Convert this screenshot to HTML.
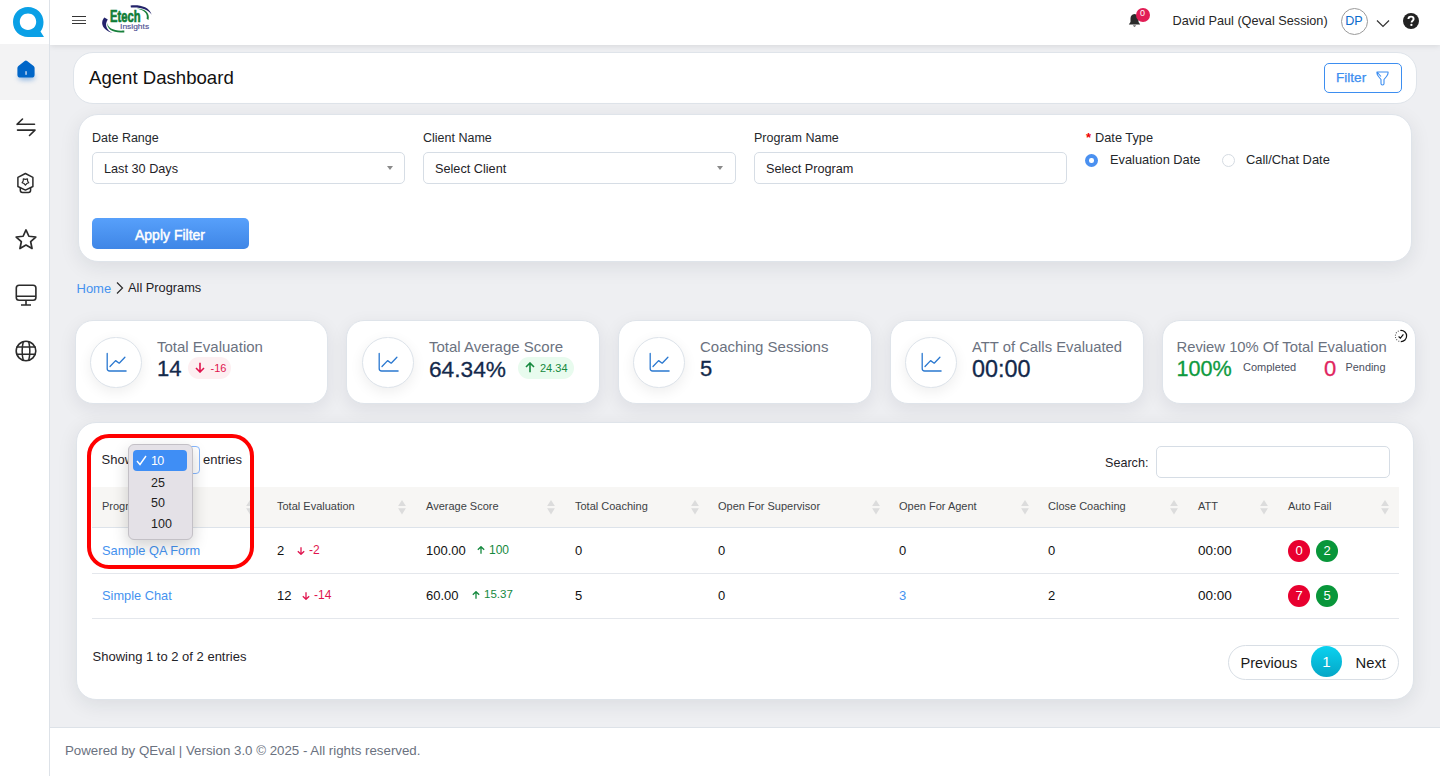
<!DOCTYPE html>
<html><head><meta charset="utf-8">
<style>
*{box-sizing:border-box;margin:0;padding:0}
html,body{width:1440px;height:776px;overflow:hidden}
body{background:#eeeff2;font-family:"Liberation Sans",sans-serif;color:#1f2328;position:relative}
.abs{position:absolute}
.t{position:absolute;white-space:nowrap;line-height:1}
#sidebar{position:absolute;left:0;top:0;width:50px;height:776px;background:#fff;border-right:1px solid #dde2e8;z-index:5}
#header{position:absolute;left:50px;top:0;width:1390px;height:45px;background:#fff;box-shadow:0 1px 6px rgba(0,0,0,.10);z-index:4}
#footer{position:absolute;left:50px;top:727px;width:1390px;height:49px;background:#fff;border-top:1px solid #dde2e8}
.card{position:absolute;background:#fff;border-radius:20px;border:1px solid #dfe4ea;box-shadow:0 5px 20px rgba(20,30,50,.085)}
.inp{position:absolute;background:#fff;border:1px solid #d6dde5;border-radius:5px}
.lbl{font-size:13px;color:#25282c}
.caret{position:absolute;width:0;height:0;border-left:3px solid transparent;border-right:3px solid transparent;border-top:4px solid #8a8a8a}
.stat{position:absolute;top:320px;width:252px;height:83px;border:1px solid transparent}
.statbg{position:absolute;top:320px;width:254px;height:84px;background:#fff;border-radius:18px;border:1px solid #dfe4ea;box-shadow:0 5px 18px rgba(20,30,50,.08)}
.ic{position:absolute;left:14px;top:15.5px;width:51.5px;height:51.5px;border-radius:50%;border:1px solid #dde3ea;background:#fff;box-shadow:0 4px 14px rgba(0,0,0,.07)}
.ic svg{position:absolute;left:14.5px;top:14.5px}
.st-title{position:absolute;left:81px;top:18px;font-size:15px;color:#6b7280;white-space:nowrap;line-height:1}
.st-val{position:absolute;left:81px;top:37px;font-size:22px;color:#13294b;-webkit-text-stroke:0.3px currentColor;white-space:nowrap;line-height:1}
.pill{position:absolute;height:22px;border-radius:11px;font-size:11px;line-height:22px;white-space:nowrap}
.th{position:absolute;top:501px;font-size:11px;color:#3c3f44;white-space:nowrap;line-height:1}
.sort{position:absolute;top:499.7px;width:8px;height:15px;line-height:0}
.td{position:absolute;font-size:13px;color:#111;white-space:nowrap;line-height:1}
.dot{position:absolute;width:22px;height:22px;border-radius:50%;color:#fff;font-size:13px;text-align:center;line-height:22px}
</style></head><body>

<!-- SIDEBAR -->
<div id="sidebar">
  <svg class="abs" style="left:12px;top:6px" width="33" height="32" viewBox="0 0 33 32">
    <path d="M16 1 C7.5 1 1 7.5 1 16 C1 24.5 7.5 31 16 31 L32 31 L28.5 25.5 C30.5 23 31.5 19.8 31.5 16 C31.5 7.5 24.5 1 16 1 Z M16 7.5 C20.7 7.5 24.2 11 24.2 15.8 C24.2 20.6 20.7 24 16 24 C11.3 24 7.8 20.6 7.8 15.8 C7.8 11 11.3 7.5 16 7.5 Z" fill="#0aa0e6" fill-rule="evenodd"/>
  </svg>
  <div class="abs" style="left:0;top:44px;width:49px;height:56px;background:#f3f3f4"></div>
  <div class="abs" style="left:18px;top:73.5px;width:17px;height:6px;border-radius:40%;background:rgba(0,95,200,.42);filter:blur(2.6px)"></div>
  <svg class="abs" style="left:17px;top:59.8px" width="18" height="18" viewBox="0 0 18 18">
    <path d="M7.7 0.9 Q8.9 0 10.1 0.9 L16.6 6 Q17.6 6.8 17.6 8.1 V14.4 Q17.6 17.6 14.4 17.6 H3.6 Q0.4 17.6 0.4 14.4 V8.1 Q0.4 6.8 1.4 6 Z" fill="#0066c8"/>
    <rect x="8.2" y="11.2" width="1.7" height="3.6" fill="#a9c7ea"/>
  </svg>
  <!-- arrows -->
  <svg class="abs" style="left:15px;top:117px" width="22" height="20" viewBox="0 0 22 20">
    <path d="M2 7.3 H19.5 M2 7.3 L7.5 2 M20 13.1 H2.5 M20 13.1 L14.5 18.5" stroke="#2b2b2b" stroke-width="1.6" fill="none" stroke-linecap="round"/>
  </svg>
  <!-- badge -->
  <svg class="abs" style="left:15px;top:171px" width="22" height="24" viewBox="0 0 22 24">
    <path d="M10.4 2.5 L17.9 6.4 V15.5 L10.4 19.1 L2.9 15.5 V6.4 Z" stroke="#2b2b2b" stroke-width="1.5" fill="none" stroke-linejoin="round"/>
    <path d="M5.3 16.6 V19.3 Q5.3 21.5 7.5 21.5 H13.4 Q15.6 21.5 15.6 19.3 V16.6" stroke="#2b2b2b" stroke-width="1.5" fill="none"/>
    <path d="M10.40 14.20 L9.05 12.56 L7.07 11.78 L8.21 9.99 L8.34 7.87 L10.40 8.40 L12.46 7.87 L12.59 9.99 L13.73 11.78 L11.75 12.56 Z" stroke="#2b2b2b" stroke-width="1.2" fill="none" stroke-linejoin="round"/>
  </svg>
  <!-- star -->
  <svg class="abs" style="left:14.5px;top:228px" width="22" height="23" viewBox="0 0 22 23">
    <path d="M11.00 1.90 L13.88 8.24 L20.80 9.02 L15.66 13.71 L17.05 20.53 L11.00 17.10 L4.95 20.53 L6.34 13.71 L1.20 9.02 L8.12 8.24 Z" stroke="#2b2b2b" stroke-width="1.7" fill="none" stroke-linejoin="round"/>
  </svg>
  <!-- monitor -->
  <svg class="abs" style="left:14.5px;top:284px" width="22" height="22" viewBox="0 0 22 22">
    <rect x="1.3" y="1.3" width="19.6" height="15" rx="2.8" stroke="#2b2b2b" stroke-width="1.6" fill="none"/>
    <path d="M1.3 12.3 H20.9 M11 16.3 V21 M6 21 H16" stroke="#2b2b2b" stroke-width="1.6" fill="none"/>
  </svg>
  <!-- globe -->
  <svg class="abs" style="left:14.5px;top:339.5px" width="22" height="22" viewBox="0 0 22 22">
    <circle cx="11" cy="11" r="9.8" stroke="#2b2b2b" stroke-width="1.6" fill="none"/>
    <path d="M1.5 7 H20.5 M1.5 14.3 H20.5 M8.3 1.5 Q6 11 8.3 20.5 M13.7 1.5 Q16 11 13.7 20.5" stroke="#2b2b2b" stroke-width="1.5" fill="none"/>
  </svg>
</div>

<!-- HEADER -->
<div id="header">
  <div class="abs" style="left:22px;top:16px;width:14px;height:1.4px;background:#333"></div>
  <div class="abs" style="left:22px;top:19.5px;width:14px;height:1.4px;background:#555"></div>
  <div class="abs" style="left:22px;top:23px;width:14px;height:1.4px;background:#333"></div>
  <!-- Etech logo -->
  <svg class="abs" style="left:48px;top:2px" width="60" height="34" viewBox="0 0 60 34">
    <path d="M6.4 15.4 C2.6 19.5 2.8 27 14.5 30.9 C8.5 28 6.2 22.5 9.8 17.4 Z" fill="#23236a"/>
    <path d="M9.2 20.6 C9.5 26 16 29.5 26.3 28.6 L26.3 30.4 C16 31.5 8.5 28 9.2 20.6 Z" fill="#18803c"/>
    <path d="M32.6 3.4 C42 2.6 51 4.5 53.7 12.7 C50 7 42 5 32.9 5.6 Z" fill="#23236a"/>
    <path d="M38.6 6.4 C46 6.5 52.5 10 50.5 18 L48.6 16.8 C50 11 46 8 38.6 6.4 Z" fill="#18803c"/>
    <text x="12.1" y="19.6" font-family="Liberation Sans" font-weight="bold" font-size="16" fill="#0e7d36" stroke="#0e7d36" stroke-width="0.7" textLength="30.4" lengthAdjust="spacingAndGlyphs">Etech</text>
    <text x="22.1" y="26.6" font-family="Liberation Sans" font-size="7.8" fill="#4f4f94" stroke="#4f4f94" stroke-width="0.15" textLength="29" lengthAdjust="spacingAndGlyphs">Insights</text>
  </svg>
  <!-- bell -->
  <svg class="abs" style="left:1078px;top:13px" width="13" height="15" viewBox="0 0 13 15">
    <path d="M6.5 1 C3.8 1 2.5 3.2 2.5 5.5 V9 L0.8 11.5 H12.2 L10.5 9 V5.5 C10.5 3.2 9.2 1 6.5 1 Z" fill="#2b2b2b"/>
    <path d="M4.8 12.5 Q6.5 14.8 8.2 12.5 Z" fill="#2b2b2b"/>
  </svg>
  <div class="abs" style="left:1085.5px;top:8px;width:14px;height:14px;border-radius:50%;background:#e11d55;color:#fff;font-size:9px;line-height:10px;text-align:center">0</div>
  <div class="t" style="left:1122.5px;top:15px;font-size:12.7px;color:#262626">David Paul (Qeval Session)</div>
  <div class="abs" style="left:1291px;top:8px;width:27px;height:27px;border-radius:50%;border:1px solid #9a9a9a;color:#0b6ccc;font-size:12.6px;text-align:center;line-height:25px;text-indent:-1px">DP</div>
  <svg class="abs" style="left:1326px;top:19px" width="14" height="9" viewBox="0 0 14 9">
    <path d="M1 1.5 L7 7.5 L13 1.5" stroke="#333" stroke-width="1.2" fill="none"/>
  </svg>
  <svg class="abs" style="left:1353px;top:13px" width="16" height="16" viewBox="0 0 16 16">
    <circle cx="8" cy="8" r="8" fill="#222"/>
    <path d="M5.4 6.1 C5.4 4.4 6.6 3.6 8 3.6 C9.5 3.6 10.6 4.5 10.6 5.9 C10.6 7.6 8.6 7.8 8.6 9.4" stroke="#fff" stroke-width="1.9" fill="none"/>
    <circle cx="8.4" cy="11.9" r="1.15" fill="#fff"/>
  </svg>
</div>

<!-- TITLE CARD -->
<div class="card" style="left:73px;top:52px;width:1344px;height:52px;box-shadow:none">
  <div class="t" style="left:15px;top:16px;font-size:18.6px;color:#111">Agent Dashboard</div>
  <div class="abs" style="left:1250px;top:10px;width:78px;height:30px;border:1px solid #3d8ef0;border-radius:5px"></div>
  <div class="t" style="left:1262px;top:18px;font-size:13.6px;color:#3d8ef0;-webkit-text-stroke:0.25px #3d8ef0">Filter</div>
  <svg class="abs" style="left:1302px;top:18px" width="13" height="15" viewBox="0 0 13 15">
    <path d="M1 1 H12 Q12.5 3 10.5 5.5 L8 8.5 V12.5 Q8 14 6.5 14 Q5 14 5 12.5 V8.5 L2.5 5.5 Q0.5 3 1 1 Z M1 1 L5 5.5" stroke="#3d8ef0" stroke-width="1.1" fill="none" stroke-linejoin="round"/>
  </svg>
</div>

<!-- FILTER CARD -->
<div class="card" style="left:78px;top:114px;width:1334px;height:148px">
</div>
<div class="t lbl" style="left:92px;top:132px;font-size:12.5px">Date Range</div>
<div class="t lbl" style="left:423px;top:132px;font-size:12.5px">Client Name</div>
<div class="t lbl" style="left:754px;top:132px;font-size:12.5px">Program Name</div>
<div class="t" style="left:1086px;top:131px;font-size:13px;color:#e00;font-weight:bold">*</div>
<div class="t lbl" style="left:1095px;top:132px;font-size:12.8px">Date Type</div>
<div class="inp" style="left:92px;top:152px;width:313px;height:32px"></div>
<div class="t lbl" style="left:104px;top:163px;font-size:12.7px;color:#1f2328">Last 30 Days</div>
<div class="caret" style="left:387px;top:166px"></div>
<div class="inp" style="left:423px;top:152px;width:313px;height:32px"></div>
<div class="t lbl" style="left:435px;top:163px;font-size:12.7px;color:#1f2328">Select Client</div>
<div class="caret" style="left:717px;top:166px"></div>
<div class="inp" style="left:754px;top:152px;width:313px;height:32px"></div>
<div class="t lbl" style="left:766px;top:163px;font-size:12.7px;color:#1f2328">Select Program</div>
<!-- radios -->
<div class="abs" style="left:1085px;top:154px;width:13px;height:13px;border-radius:50%;background:#4a90f0"></div>
<div class="abs" style="left:1089.3px;top:158.3px;width:4.4px;height:4.4px;border-radius:50%;background:#fff"></div>
<div class="t lbl" style="left:1110px;top:154px;font-size:12.8px">Evaluation Date</div>
<div class="abs" style="left:1222px;top:154px;width:13px;height:13px;border-radius:50%;border:1px solid #d5dbe2;background:#fff"></div>
<div class="t lbl" style="left:1246px;top:154px;font-size:12.9px">Call/Chat Date</div>
<!-- apply -->
<div class="abs" style="left:92px;top:218px;width:157px;height:31px;border-radius:5px;background:linear-gradient(#57a0fb,#3f86e6)"></div>
<div class="t" style="left:135px;top:228px;font-size:14px;color:#fff;-webkit-text-stroke:0.45px #fff">Apply Filter</div>

<!-- BREADCRUMB -->
<div class="t" style="left:76.5px;top:282px;font-size:13px;color:#4592ef">Home</div>
<svg class="abs" style="left:115px;top:281px" width="10" height="14" viewBox="0 0 10 14">
  <path d="M2 1.5 L7.5 7 L2 12.5" stroke="#2b2b2b" stroke-width="1.2" fill="none"/>
</svg>
<div class="t" style="left:128px;top:282px;font-size:12.8px;color:#1f2328">All Programs</div>

<!-- STAT CARDS -->
<div class="statbg" style="left:75px;width:253px"></div>
<div class="statbg" style="left:346px"></div>
<div class="statbg" style="left:618px"></div>
<div class="statbg" style="left:890px"></div>
<div class="statbg" style="left:1162px"></div>

<div class="stat" style="left:75px">
  <div class="ic"><svg width="22" height="22" viewBox="0 0 22 22"><path d="M1.2 1.4 V16.5 Q1.2 19 3.7 19 H20.1" stroke="#2a78d0" stroke-width="1.3" fill="none" stroke-linecap="round"/><path d="M4 14.5 L9.6 8.6 L13.2 11.2 L18.9 5.3" stroke="#2a78d0" stroke-width="1.3" fill="none" stroke-linecap="round" stroke-linejoin="round"/></svg></div>
  <div class="st-title">Total Evaluation</div>
  <div class="st-val">14</div>
  <div class="pill" style="left:112px;top:36px;width:43px;background:#fdeff1;color:#e0144e"></div>
  <svg class="abs" style="left:119px;top:41px" width="10" height="11" viewBox="0 0 10 11"><path d="M5 0.8 V10 M1 6 L5 10 L9 6" stroke="#e0144e" stroke-width="1.6" fill="none"/></svg>
  <div class="t" style="left:134.5px;top:42px;font-size:11px;color:#e0144e">-16</div>
</div>
<div class="stat" style="left:347px">
  <div class="ic"><svg width="22" height="22" viewBox="0 0 22 22"><path d="M1.2 1.4 V16.5 Q1.2 19 3.7 19 H20.1" stroke="#2a78d0" stroke-width="1.3" fill="none" stroke-linecap="round"/><path d="M4 14.5 L9.6 8.6 L13.2 11.2 L18.9 5.3" stroke="#2a78d0" stroke-width="1.3" fill="none" stroke-linecap="round" stroke-linejoin="round"/></svg></div>
  <div class="st-title">Total Average Score</div>
  <div class="st-val" style="font-size:22.7px">64.34%</div>
  <div class="pill" style="left:170px;top:36px;width:56px;background:#e8fbee;color:#15893e"></div>
  <svg class="abs" style="left:177px;top:41px" width="10" height="11" viewBox="0 0 10 11"><path d="M5 10.2 V1 M1 5 L5 1 L9 5" stroke="#15893e" stroke-width="1.6" fill="none"/></svg>
  <div class="t" style="left:192px;top:42px;font-size:11px;color:#15893e">24.34</div>
</div>
<div class="stat" style="left:618px">
  <div class="ic"><svg width="22" height="22" viewBox="0 0 22 22"><path d="M1.2 1.4 V16.5 Q1.2 19 3.7 19 H20.1" stroke="#2a78d0" stroke-width="1.3" fill="none" stroke-linecap="round"/><path d="M4 14.5 L9.6 8.6 L13.2 11.2 L18.9 5.3" stroke="#2a78d0" stroke-width="1.3" fill="none" stroke-linecap="round" stroke-linejoin="round"/></svg></div>
  <div class="st-title">Coaching Sessions</div>
  <div class="st-val">5</div>
</div>
<div class="stat" style="left:890px">
  <div class="ic"><svg width="22" height="22" viewBox="0 0 22 22"><path d="M1.2 1.4 V16.5 Q1.2 19 3.7 19 H20.1" stroke="#2a78d0" stroke-width="1.3" fill="none" stroke-linecap="round"/><path d="M4 14.5 L9.6 8.6 L13.2 11.2 L18.9 5.3" stroke="#2a78d0" stroke-width="1.3" fill="none" stroke-linecap="round" stroke-linejoin="round"/></svg></div>
  <div class="st-title" style="font-size:14.8px;top:19px">ATT of Calls Evaluated</div>
  <div class="st-val" style="font-size:23.4px">00:00</div>
</div>
<div class="stat" style="left:1163px">
  <div class="st-title" style="left:12.5px;top:19px;font-size:14.8px">Review 10% Of Total Evaluation</div>
  <div class="st-val" style="left:12.5px;color:#0e9a3e;font-size:21.6px">100%</div>
  <div class="t" style="left:79px;top:41px;font-size:11px;color:#4b5060">Completed</div>
  <div class="st-val" style="left:160px;color:#e0245e;font-size:22px">0</div>
  <div class="t" style="left:181.5px;top:41px;font-size:10.9px;color:#4b5060">Pending</div>
  <svg class="abs" style="left:229.6px;top:7.9px" width="14" height="14" viewBox="0 0 14 14">
    <path d="M7 1.4 A5.6 5.6 0 0 1 7 12.6" stroke="#111" stroke-width="1.2" fill="none"/>
    <path d="M7 1.4 A5.6 5.6 0 0 0 7 12.6" stroke="#555" stroke-width="1.1" fill="none" stroke-dasharray="1 1.4"/>
    <path d="M4.6 7.5 L6.4 9.1 L9.4 5.4" stroke="#111" stroke-width="1.2" fill="none"/>
  </svg>
</div>

<!-- TABLE CARD -->
<div class="card" style="left:76px;top:422px;width:1338px;height:278px"></div>


<!-- TABLE CONTENT -->
<div class="t" style="left:101.5px;top:453px;font-size:13px;color:#1f2328">Show</div>
<div class="abs" style="left:130px;top:446px;width:70px;height:28px;border:1px solid #86b7fe;border-radius:4px;background:#fff"></div>
<div class="t" style="left:203px;top:453px;font-size:13px;color:#1f2328">entries</div>
<div class="t" style="left:1105px;top:457px;font-size:12.6px;color:#1f2328">Search:</div>
<div class="inp" style="left:1156px;top:446px;width:234px;height:32px"></div>
<div class="abs" style="left:92px;top:487px;width:1307px;height:41px;background:#f7f6f4;border-bottom:1px solid #dde3ea"></div>
<div class="th" style="left:102px">Program</div>
<div class="sort" style="left:246.0px"><svg width="8" height="15" viewBox="0 0 8 15"><path d="M4 0 L7.9 6.1 H0.1 Z M4 14.4 L7.9 8.3 H0.1 Z" fill="#dcdcdc"/></svg></div>
<div class="th" style="left:277px">Total Evaluation</div>
<div class="sort" style="left:398.0px"><svg width="8" height="15" viewBox="0 0 8 15"><path d="M4 0 L7.9 6.1 H0.1 Z M4 14.4 L7.9 8.3 H0.1 Z" fill="#dcdcdc"/></svg></div>
<div class="th" style="left:426px">Average Score</div>
<div class="sort" style="left:547.0px"><svg width="8" height="15" viewBox="0 0 8 15"><path d="M4 0 L7.9 6.1 H0.1 Z M4 14.4 L7.9 8.3 H0.1 Z" fill="#dcdcdc"/></svg></div>
<div class="th" style="left:575px">Total Coaching</div>
<div class="sort" style="left:690.6px"><svg width="8" height="15" viewBox="0 0 8 15"><path d="M4 0 L7.9 6.1 H0.1 Z M4 14.4 L7.9 8.3 H0.1 Z" fill="#dcdcdc"/></svg></div>
<div class="th" style="left:718px">Open For Supervisor</div>
<div class="sort" style="left:872.4px"><svg width="8" height="15" viewBox="0 0 8 15"><path d="M4 0 L7.9 6.1 H0.1 Z M4 14.4 L7.9 8.3 H0.1 Z" fill="#dcdcdc"/></svg></div>
<div class="th" style="left:899px">Open For Agent</div>
<div class="sort" style="left:1021.0px"><svg width="8" height="15" viewBox="0 0 8 15"><path d="M4 0 L7.9 6.1 H0.1 Z M4 14.4 L7.9 8.3 H0.1 Z" fill="#dcdcdc"/></svg></div>
<div class="th" style="left:1048px">Close Coaching</div>
<div class="sort" style="left:1170.0px"><svg width="8" height="15" viewBox="0 0 8 15"><path d="M4 0 L7.9 6.1 H0.1 Z M4 14.4 L7.9 8.3 H0.1 Z" fill="#dcdcdc"/></svg></div>
<div class="th" style="left:1198px">ATT</div>
<div class="sort" style="left:1259.6px"><svg width="8" height="15" viewBox="0 0 8 15"><path d="M4 0 L7.9 6.1 H0.1 Z M4 14.4 L7.9 8.3 H0.1 Z" fill="#dcdcdc"/></svg></div>
<div class="th" style="left:1288px">Auto Fail</div>
<div class="sort" style="left:1380.7px"><svg width="8" height="15" viewBox="0 0 8 15"><path d="M4 0 L7.9 6.1 H0.1 Z M4 14.4 L7.9 8.3 H0.1 Z" fill="#dcdcdc"/></svg></div>

<div class="abs" style="left:92px;top:573px;width:1307px;height:1px;background:#e4e7ec"></div>
<div class="abs" style="left:92px;top:618px;width:1307px;height:1px;background:#e4e7ec"></div>
<!-- row1 -->
<div class="td" style="left:102px;top:545px;color:#4592ef;font-size:12.8px">Sample QA Form</div>
<div class="td" style="left:277px;top:544px">2</div>
<svg class="abs" style="left:297px;top:546.5px" width="8" height="8" viewBox="0 0 8 8"><path d="M4 0.3 V7.3 M0.8 4.2 L4 7.3 L7.2 4.2" stroke="#e0144e" stroke-width="1.3" fill="none"/></svg>
<div class="td" style="left:309px;top:544px;color:#e0144e;font-size:12px">-2</div>
<div class="td" style="left:426px;top:544px">100.00</div>
<svg class="abs" style="left:477px;top:546px" width="8" height="8" viewBox="0 0 8 8"><path d="M4 7.7 V0.7 M0.8 3.8 L4 0.7 L7.2 3.8" stroke="#15893e" stroke-width="1.3" fill="none"/></svg>
<div class="td" style="left:489px;top:543.5px;color:#15893e;font-size:12px">100</div>
<div class="td" style="left:575px;top:544px">0</div>
<div class="td" style="left:718px;top:544px">0</div>
<div class="td" style="left:899px;top:544px">0</div>
<div class="td" style="left:1048px;top:544px">0</div>
<div class="td" style="left:1198px;top:544px;font-size:13.5px">00:00</div>
<div class="dot" style="left:1288px;top:540px;background:#e8002f">0</div>
<div class="dot" style="left:1316px;top:540px;background:#08963a">2</div>
<!-- row2 -->
<div class="td" style="left:102px;top:590px;color:#4592ef;font-size:12.8px">Simple Chat</div>
<div class="td" style="left:277px;top:589px">12</div>
<svg class="abs" style="left:302px;top:591.5px" width="8" height="8" viewBox="0 0 8 8"><path d="M4 0.3 V7.3 M0.8 4.2 L4 7.3 L7.2 4.2" stroke="#e0144e" stroke-width="1.3" fill="none"/></svg>
<div class="td" style="left:314px;top:589px;color:#e0144e;font-size:12px">-14</div>
<div class="td" style="left:426px;top:589px">60.00</div>
<svg class="abs" style="left:472px;top:591px" width="8" height="8" viewBox="0 0 8 8"><path d="M4 7.7 V0.7 M0.8 3.8 L4 0.7 L7.2 3.8" stroke="#15893e" stroke-width="1.3" fill="none"/></svg>
<div class="td" style="left:484px;top:588.5px;color:#15893e;font-size:11.5px">15.37</div>
<div class="td" style="left:575px;top:589px">5</div>
<div class="td" style="left:718px;top:589px">0</div>
<div class="td" style="left:899px;top:589px;color:#4592ef">3</div>
<div class="td" style="left:1048px;top:589px">2</div>
<div class="td" style="left:1198px;top:589px;font-size:13.5px">00:00</div>
<div class="dot" style="left:1288px;top:585px;background:#e8002f">7</div>
<div class="dot" style="left:1316px;top:585px;background:#08963a">5</div>
<!-- bottom -->
<div class="t" style="left:92.5px;top:650px;font-size:13px;color:#1f2328">Showing 1 to 2 of 2 entries</div>
<div class="abs" style="left:1228px;top:645px;width:171px;height:35px;border:1px solid #d8dee5;border-radius:18px;background:#fff"></div>
<div class="t" style="left:1240.5px;top:656px;font-size:14.6px;color:#1a1a1a">Previous</div>
<div class="abs" style="left:1311px;top:646px;width:31px;height:31px;border-radius:50%;background:linear-gradient(#0ad2f0,#05a6c6);color:#fff;font-size:15px;text-align:center;line-height:31px">1</div>
<div class="t" style="left:1355.5px;top:656px;font-size:14.8px;color:#1a1a1a">Next</div>

<!-- DROPDOWN POPUP -->
<div class="abs" style="left:127.5px;top:444px;width:65px;height:95.5px;background:#e4e1e7;border:1px solid #c3c0c6;border-radius:6px;box-shadow:0 6px 16px rgba(0,0,0,.18)"></div>
<div class="abs" style="left:133px;top:450px;width:54px;height:21px;background:#3f8ef5;border-radius:4px"></div>
<svg class="abs" style="left:136px;top:455px" width="11" height="11" viewBox="0 0 11 11"><path d="M1 6 L4 9.5 L10 1" stroke="#fff" stroke-width="1.4" fill="none"/></svg>
<div class="t" style="left:151px;top:454.5px;font-size:12.5px;color:#fff;letter-spacing:-0.8px">10</div>
<div class="t" style="left:151px;top:476.5px;font-size:12.5px;color:#1d1d1d">25</div>
<div class="t" style="left:151px;top:497px;font-size:12.5px;color:#1d1d1d">50</div>
<div class="t" style="left:151px;top:517.5px;font-size:12.5px;color:#1d1d1d">100</div>

<!-- RED HIGHLIGHT -->
<div class="abs" style="left:87px;top:434px;width:167px;height:135px;border:4px solid #ff0000;border-radius:22px"></div>

<!-- FOOTER -->
<div id="footer">
  <div class="t" style="left:15px;top:16px;font-size:13.3px;color:#6b7280">Powered by QEval | Version 3.0 © 2025 - All rights reserved.</div>
</div>

</body></html>
